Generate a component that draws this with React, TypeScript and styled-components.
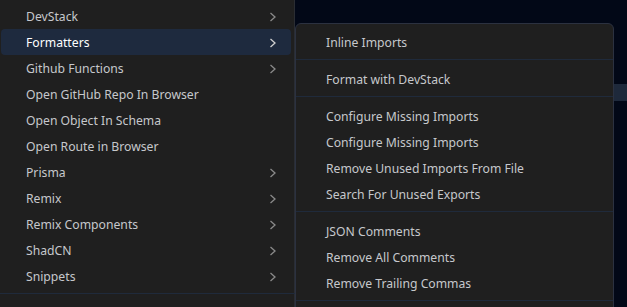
import React from "react";
import styled, { createGlobalStyle } from "styled-components";

const Global = createGlobalStyle`
  html, body { margin: 0; padding: 0; background: #020817; }
  body { font-family: "Noto Sans", "Open Sans", "Liberation Sans", sans-serif; }
`;

const Page = styled.div`
  position: relative;
  width: 627px;
  height: 307px;
  overflow: hidden;
  background: #020817;
`;

const BackdropList = styled.div`
  display: flex;
  flex-direction: column;
  padding-top: 84px;
`;

const BackdropRow = styled.div`
  height: 17px;
  background: #1e293b;
`;

const MenuLayer = styled.div`
  position: absolute;
  top: 0;
  left: 0;
  display: flex;
  align-items: flex-start;
`;

const LeftMenu = styled.div`
  width: 295px;
  height: 320px;
  box-sizing: border-box;
  background: #1f1f1f;
  border-right: 1px solid #2a2d33;
  padding: 3px 3px 0 1px;
  display: flex;
  flex-direction: column;
`;

const SubMenu = styled.div`
  margin-top: 23px;
  width: 319px;
  height: 300px;
  box-sizing: border-box;
  background: #1f1f1f;
  border: 1px solid #2b3140;
  border-radius: 6px 6px 0 0;
  padding-top: 5px;
  display: flex;
  flex-direction: column;
`;

const Item = styled.div<{ $active?: boolean; $indent: number }>`
  height: 26px;
  flex: 0 0 26px;
  display: flex;
  align-items: center;
  justify-content: space-between;
  padding: 1px 14px 0 ${(p) => p.$indent}px;
  box-sizing: border-box;
  border-radius: 4px;
  font-size: 12.2px;
  color: ${(p) => (p.$active ? "#ffffff" : "#c6c8cc")};
  background: ${(p) => (p.$active ? "#1e2a3e" : "transparent")};
  white-space: nowrap;
`;

const Separator = styled.div<{ $top: number; $bottom: number; $inset?: number }>`
  height: 1px;
  flex: 0 0 1px;
  background: #1f2a3b;
  margin: ${(p) => p.$top}px ${(p) => -(p.$inset ?? 0)}px ${(p) => p.$bottom}px;
`;

const Chevron = ({ active }: { active?: boolean }) => (
  <svg width="8" height="10" viewBox="0 0 8 10" style={{ display: "block" }}>
    <path
      d="M1.5 1 L6 5 L1.5 9"
      fill="none"
      stroke={active ? "#d0d0d0" : "#8a8a8a"}
      strokeWidth="1.3"
    />
  </svg>
);

const leftItems: { label: string; sub?: boolean; active?: boolean }[] = [
  { label: "DevStack", sub: true },
  { label: "Formatters", sub: true, active: true },
  { label: "Github Functions", sub: true },
  { label: "Open GitHub Repo In Browser" },
  { label: "Open Object In Schema" },
  { label: "Open Route in Browser" },
  { label: "Prisma", sub: true },
  { label: "Remix", sub: true },
  { label: "Remix Components", sub: true },
  { label: "ShadCN", sub: true },
  { label: "Snippets", sub: true },
];

const subGroups: string[][] = [
  ["Inline Imports"],
  ["Format with DevStack"],
  [
    "Configure Missing Imports",
    "Configure Missing Imports",
    "Remove Unused Imports From File",
    "Search For Unused Exports",
  ],
  ["JSON Comments", "Remove All Comments", "Remove Trailing Commas"],
];

export default function App() {
  return (
    <Page>
      <Global />
      <BackdropList>
        <BackdropRow />
      </BackdropList>
      <MenuLayer>
        <LeftMenu>
          {leftItems.map((it) => (
            <Item key={it.label} $active={it.active} $indent={25}>
              <span>{it.label}</span>
              {it.sub && <Chevron active={it.active} />}
            </Item>
          ))}
          <Separator $top={4} $bottom={6} $inset={4} />
        </LeftMenu>
        <SubMenu>
          {subGroups.map((g, gi) => (
            <React.Fragment key={gi}>
              {g.map((label, i) => (
                <Item key={i} $indent={30}>
                  <span>{label}</span>
                </Item>
              ))}
              <Separator $top={4} $bottom={6} />
            </React.Fragment>
          ))}
        </SubMenu>
      </MenuLayer>
    </Page>
  );
}
